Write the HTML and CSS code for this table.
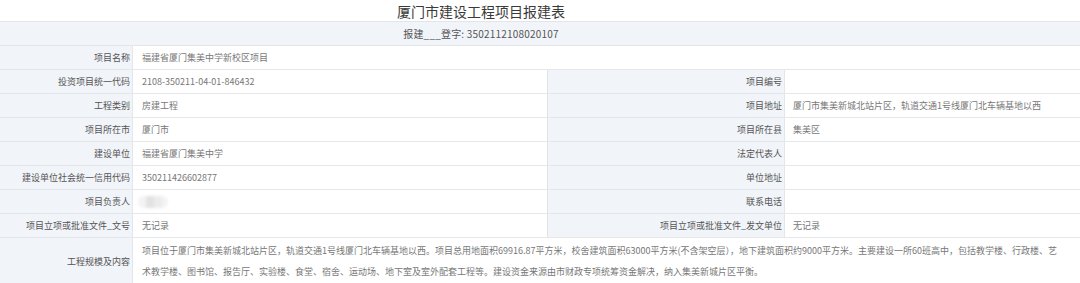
FILE: index.html
```html
<!DOCTYPE html>
<html lang="zh-CN">
<head>
<meta charset="utf-8">
<title>厦门市建设工程项目报建表</title>
<link rel="stylesheet" href="styles.css">
</head>
<body>
<div class="page">
  <h1 class="title">厦门市建设工程项目报建表</h1>
  <div class="band"><span class="band-text">报建___登字: 3502112108020107</span></div>
  <div class="sheet">
    <div class="cell lab">项目名称</div>
    <div class="cell val span3">福建省厦门集美中学新校区项目</div>

    <div class="cell lab">投资项目统一代码</div>
    <div class="cell val mid">2108-350211-04-01-846432</div>
    <div class="cell lab lab2">项目编号</div>
    <div class="cell val val2"></div>

    <div class="cell lab">工程类别</div>
    <div class="cell val mid">房建工程</div>
    <div class="cell lab lab2">项目地址</div>
    <div class="cell val val2">厦门市集美新城北站片区，轨道交通1号线厦门北车辆基地以西</div>

    <div class="cell lab">项目所在市</div>
    <div class="cell val mid">厦门市</div>
    <div class="cell lab lab2">项目所在县</div>
    <div class="cell val val2">集美区</div>

    <div class="cell lab">建设单位</div>
    <div class="cell val mid">福建省厦门集美中学</div>
    <div class="cell lab lab2">法定代表人</div>
    <div class="cell val val2"></div>

    <div class="cell lab">建设单位社会统一信用代码</div>
    <div class="cell val mid">350211426602877</div>
    <div class="cell lab lab2">单位地址</div>
    <div class="cell val val2"></div>

    <div class="cell lab">项目负责人</div>
    <div class="cell val mid"><span class="redacted"></span></div>
    <div class="cell lab lab2">联系电话</div>
    <div class="cell val val2"></div>

    <div class="cell lab">项目立项或批准文件_文号</div>
    <div class="cell val mid">无记录</div>
    <div class="cell lab lab2">项目立项或批准文件_发文单位</div>
    <div class="cell val val2">无记录</div>

    <div class="cell lab tall">工程规模及内容</div>
    <div class="cell val span3 multi">项目位于厦门市集美新城北站片区，轨道交通1号线厦门北车辆基地以西。项目总用地面积69916.87平方米，校舍建筑面积63000平方米(不含架空层），地下建筑面积约9000平方米。主要建设一所60班高中，包括教学楼、行政楼、艺术教学楼、图书馆、报告厅、实验楼、食堂、宿舍、运动场、地下室及室外配套工程等。建设资金来源由市财政专项统筹资金解决，纳入集美新城片区平衡。</div>
  </div>
</div>
</body>
</html>
```

FILE: styles.css
```css
html, body {
  margin: 0;
  padding: 0;
  background: #ffffff;
}

body {
  font-family: "Noto Sans CJK SC", "Microsoft YaHei", "Noto Sans", sans-serif;
  color: #666666;
}

.page {
  width: 1080px;
}

.title {
  margin: 0;
  height: 21px;
  padding-right: 118px;
  font-size: 14px;
  line-height: 23px;
  font-weight: 400;
  color: #3a3a3a;
  text-align: center;
}

.band {
  box-sizing: border-box;
  height: 25px;
  padding-right: 118px;
  background: #f1f4f9;
  border-top: 1px solid #e3e5e8;
  border-bottom: 1px solid #e3e5e8;
  text-align: center;
  font-size: 10px;
  line-height: 23px;
  color: #555555;
}

.band-text {
  letter-spacing: 0.2px;
}

.sheet {
  display: grid;
  grid-template-columns: 133px 415px 237px 1fr;
  font-size: 9px;
}

.cell {
  box-sizing: border-box;
  height: 24px;
  line-height: 23px;
  border-bottom: 1px solid #e6e7ea;
  white-space: nowrap;
  overflow: hidden;
}

.lab {
  background: #f1f4f9;
  color: #555555;
  text-align: right;
  padding-right: 2px;
  border-right: 1px solid #e4e6ea;
}

.val {
  background: #ffffff;
  color: #777777;
  padding-left: 9px;
}

.mid {
  border-right: 1px solid #dfe2e7;
}

.val2 {
  padding-left: 8px;
}

.span3 {
  grid-column: 2 / -1;
}

.tall {
  height: auto;
  display: flex;
  align-items: center;
  justify-content: flex-end;
}

.multi {
  height: auto;
  white-space: normal;
  line-height: 21px;
  padding-top: 2px;
  padding-right: 16px;
  padding-bottom: 2px;
}

.redacted {
  display: inline-block;
  vertical-align: middle;
  width: 30px;
  height: 12px;
  margin-left: -4px;
  margin-top: -2px;
  border-radius: 6px;
  background:
    linear-gradient(90deg, transparent 0 8px, #e2e2e2 8px 16px, #ececec 16px 24px, transparent 24px),
    #f3f3f3;
  filter: blur(1.5px);
}
```
